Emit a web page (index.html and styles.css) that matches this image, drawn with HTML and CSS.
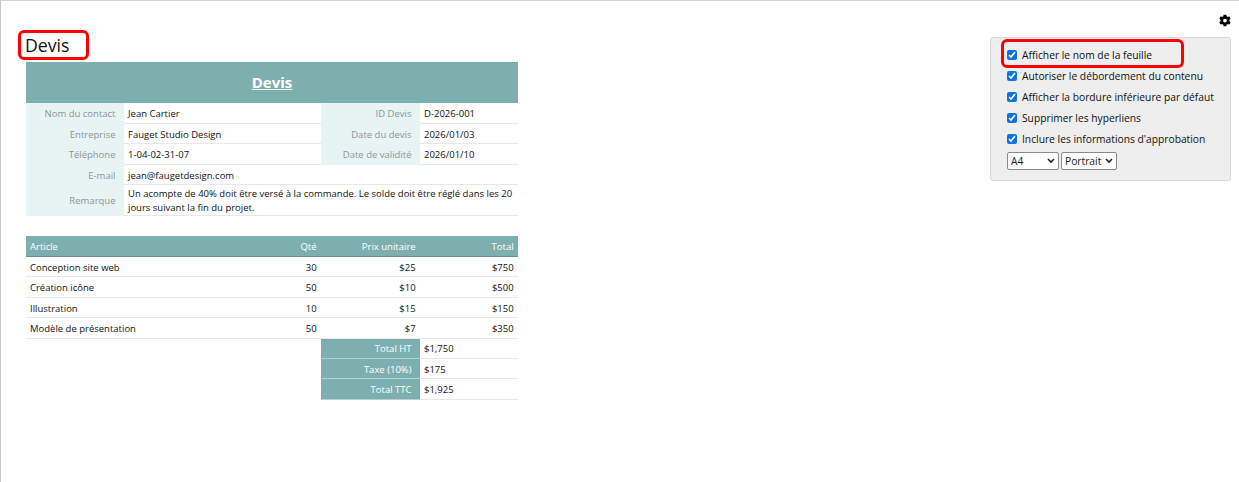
FILE: index.html
```html
<!DOCTYPE html>
<html lang="fr">
<head>
<meta charset="utf-8">
<title>Devis</title>
<link rel="stylesheet" href="styles.css">
</head>
<body>
<div class="page">
  <main class="sheet">
    <h1 class="sheet-name">Devis<span class="mark mark-title"></span></h1>
    <table class="quote info">
      <colgroup><col class="c1"><col class="c2"><col class="c3"><col class="c4"></colgroup>
      <tr class="title-row"><td colspan="4"><a href="#">Devis</a></td></tr>
      <tr><th>Nom du contact</th><td>Jean Cartier</td><th>ID Devis</th><td>D-2026-001</td></tr>
      <tr><th>Entreprise</th><td>Fauget Studio Design</td><th>Date du devis</th><td>2026/01/03</td></tr>
      <tr><th>Téléphone</th><td>1-04-02-31-07</td><th>Date de validité</th><td>2026/01/10</td></tr>
      <tr><th>E-mail</th><td colspan="3">jean@faugetdesign.com</td></tr>
      <tr class="note"><th>Remarque</th><td colspan="3">Un acompte de 40% doit être versé à la commande. Le solde doit être réglé dans les 20 jours suivant la fin du projet.</td></tr>
    </table>
    <table class="quote items">
      <colgroup><col class="i1"><col class="i2"><col class="c3"><col class="c4"></colgroup>
      <tr class="head"><td>Article</td><td class="num">Qté</td><td class="num">Prix unitaire</td><td class="num">Total</td></tr>
      <tr><td>Conception site web</td><td class="num">30</td><td class="num">$25</td><td class="num">$750</td></tr>
      <tr><td>Création icône</td><td class="num">50</td><td class="num">$10</td><td class="num">$500</td></tr>
      <tr><td>Illustration</td><td class="num">10</td><td class="num">$15</td><td class="num">$150</td></tr>
      <tr><td>Modèle de présentation</td><td class="num">50</td><td class="num">$7</td><td class="num">$350</td></tr>
      <tr class="sum"><td class="blank" colspan="2"></td><th>Total HT</th><td>$1,750</td></tr>
      <tr class="sum"><td class="blank" colspan="2"></td><th>Taxe (10%)</th><td>$175</td></tr>
      <tr class="sum"><td class="blank" colspan="2"></td><th>Total TTC</th><td>$1,925</td></tr>
    </table>
  </main>
  <aside class="side">
    <svg class="gear" viewBox="0 0 512 512" aria-hidden="true"><path d="M487 316l-43-25a195 195 0 0 0 0-70l43-25c5-3 7-9 6-14-11-36-30-68-55-95-4-4-10-5-15-2l-43 25a190 190 0 0 0-61-35V25c0-6-4-10-9-12-37-8-75-8-110 0-5 2-9 6-9 12v50a196 196 0 0 0-61 35L87 85c-5-3-11-2-15 2-25 27-44 59-55 95-2 5 1 11 6 14l43 25a195 195 0 0 0 0 70l-43 25c-5 3-8 9-6 14 11 36 30 68 55 95 4 4 10 5 15 2l43-25a190 190 0 0 0 61 35v50c0 6 4 10 9 12 37 8 75 8 110 0 5-2 9-6 9-12v-50a196 196 0 0 0 61-35l43 25c5 3 11 2 15-2 25-27 44-59 55-95 2-5-1-11-6-14zM255 336a80 80 0 1 1 0-160 80 80 0 0 1 0 160z"/></svg>
    <form class="panel">
      <label class="opt"><input type="checkbox" checked>Afficher le nom de la feuille<span class="mark mark-opt"></span></label>
      <label class="opt"><input type="checkbox" checked>Autoriser le débordement du contenu</label>
      <label class="opt"><input type="checkbox" checked>Afficher la bordure inférieure par défaut</label>
      <label class="opt"><input type="checkbox" checked>Supprimer les hyperliens</label>
      <label class="opt"><input type="checkbox" checked>Inclure les informations d'approbation</label>
      <div class="selects">
        <select class="size"><option>A4</option></select>
        <select class="orient"><option>Portrait</option></select>
      </div>
    </form>
  </aside>
</div>
</body>
</html>
```

FILE: styles.css
```css
html, body { margin: 0; height: 100%; background: #fff; }
body {
  font-family: "Open Sans", "Noto Sans", sans-serif;
  font-size: 9.5px;
  color: #111;
  box-sizing: border-box;
  border-top: 1px solid #ddd3d3;
  border-left: 1px solid #c8c8c8;
  overflow: hidden;
}
.page { display: flex; justify-content: space-between; align-items: flex-start; padding: 0 8px 0 25px; }
.sheet { width: 492px; padding-top: 30px; }
.sheet-name {
  position: relative;
  margin: 0 0 1px -1px;
  height: 30px;
  line-height: 29px;
  font-size: 17.7px;
  font-weight: 400;
}
.mark { position: absolute; border: 3px solid #f00; border-radius: 6px; box-sizing: border-box; pointer-events: none; }
.mark-title { left: -7px; top: -1px; width: 71px; height: 30px; }
.mark-opt { left: -6px; top: -6px; width: 183px; height: 29px; }

.quote { width: 492px; border-collapse: collapse; table-layout: fixed; }
.c1 { width: 98px; }
.c2 { width: 197px; }
.c3 { width: 99px; }
.c4 { width: 98px; }
.i1 { width: 245px; }
.i2 { width: 50px; }
.quote td, .quote th {
  height: 20.4px;
  padding: 2px 4px 0;
  box-sizing: border-box;
  border-bottom: 1px solid #e8e8e8;
  font-weight: 400;
  line-height: 13.5px;
}
.quote th { text-align: right; padding-right: 8.5px; color: #8b9797; background: #e8f3f4; border-bottom-color: #e8f3f4; }
.title-row td {
  height: 41px;
  padding: 0;
  background: #7dafaf;
  border: 0;
  text-align: center;
  font-size: 15px;
  font-weight: 700;
}
.title-row a { color: #fff; }
.note td, .note th { height: 31px; padding-top: 1px; }
.quote .note td { padding-right: 0; }
.items { margin-top: 20px; }
.head td { color: #fff; background: #7dafaf; border-bottom: 1px solid #6e8f8f; }
.quote .num { text-align: right; padding-right: 4.4px; }
.blank, .quote .blank { border-bottom: 0; }
.quote .sum th { color: #fff; background: #7dafaf; border-bottom: 1px solid #b5d0d0; }

.side { width: 241px; display: flex; flex-direction: column; align-items: flex-end; padding-top: 13px; }
.gear { width: 12px; height: 13px; display: block; margin-bottom: 10px; fill: #000; }
.panel {
  width: 100%;
  box-sizing: border-box;
  height: 144px;
  padding: 7px 8px 0 16px;
  background: #eee;
  border: 1px solid #d8d8d8;
  border-radius: 3px;
  font-size: 10.25px;
}
.opt { position: relative; display: flex; align-items: center; height: 20.8px; white-space: nowrap; }
.opt input { width: 10px; height: 10px; margin: 0 5px 0 0; accent-color: #0b74de; flex: none; }
.selects { display: flex; gap: 2px; margin-top: 3px; }
.selects select {
  appearance: none;
  font: inherit;
  height: 18px;
  padding: 0 0 0 3px;
  background: #fff url("data:image/svg+xml,%3Csvg xmlns='http://www.w3.org/2000/svg' width='8' height='6'%3E%3Cpath d='M1 1l3 3 3-3' fill='none' stroke='%23222' stroke-width='1.6'/%3E%3C/svg%3E") no-repeat right 3px center;
  border: 1px solid #8a8a8a;
  border-radius: 2px;
  color: #1c1c1c;
}
.size { width: 52px; }
.orient { width: 56px; }
```
